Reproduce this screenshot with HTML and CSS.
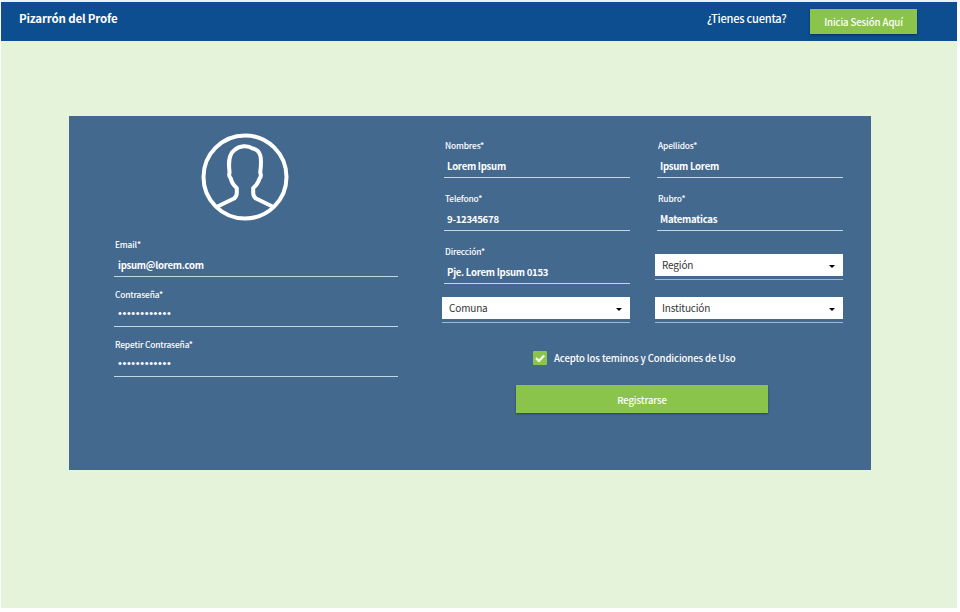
FILE: index.html
```html
<!DOCTYPE html>
<html lang="es">
<head>
<meta charset="utf-8">
<title>Pizarrón del Profe</title>
<link rel="stylesheet" href="styles.css">
</head>
<body>
<div class="page">
  <header class="topbar">
    <span class="brand">Pizarrón del Profe</span>
    <span class="question">¿Tienes cuenta?</span>
    <a class="login">Inicia Sesión Aquí</a>
  </header>
  <main class="card">
    <section class="account">
      <svg class="avatar" viewBox="0 0 88 88" fill="none" stroke="#fff" stroke-width="4" stroke-linejoin="round">
        <circle cx="44" cy="44" r="41.500"/>
        <path d="M16.500 73.500L33 65.500Q35.800 63.500 35.800 60V55Q31 51 29.800 45.500Q27.300 43 28.600 39.500C27.500 31 27 22 33.500 17C38.500 12.500 47 12 51.500 15.500C60.500 17 61 26 59.200 39.500Q60.800 43 58.500 45.500Q57 51 52.200 55V60Q52.200 63.500 55 65.500L71.500 73.500"/>
      </svg>
      <div class="field"><label class="label">Email*</label><div class="value email">ipsum@lorem.com</div></div>
      <div class="field"><label class="label">Contraseña*</label><div class="value dots">••••••••••••</div></div>
      <div class="field"><label class="label">Repetir Contraseña*</label><div class="value dots">••••••••••••</div></div>
    </section>
    <section class="personal">
      <div class="grid">
        <div class="field"><label class="label">Nombres*</label><div class="value">Lorem Ipsum</div></div>
        <div class="field"><label class="label">Apellidos*</label><div class="value">Ipsum Lorem</div></div>
        <div class="field"><label class="label">Telefono*</label><div class="value">9-12345678</div></div>
        <div class="field"><label class="label">Rubro*</label><div class="value">Matematicas</div></div>
        <div class="field"><label class="label">Dirección*</label><div class="value">Pje. Lorem Ipsum 0153</div></div>
        <div class="select region"><div class="box">Región<i class="caret"></i></div></div>
        <div class="select"><div class="box">Comuna<i class="caret"></i></div></div>
        <div class="select"><div class="box">Institución<i class="caret"></i></div></div>
      </div>
      <div class="terms">
        <span class="check"><svg viewBox="0 0 14 14" fill="none" stroke="#fff" stroke-width="2.300"><path d="M3 7.200L6 10L11.200 4.500"/></svg></span>
        <span class="terms-text">Acepto los teminos y Condiciones de Uso</span>
      </div>
      <div class="submit">Registrarse</div>
    </section>
  </main>
</div>
</body>
</html>
```
FILE: styles.css
```css
* { box-sizing: border-box; }
body {
  margin: 0;
  background: #fdfefd;
  font-family: "Noto Sans CJK SC", "Open Sans", sans-serif;
  color: #fff;
}
.page {
  width: 956px;
  height: 608px;
  margin-left: 1px;
  border-top: 2px solid #e6f3f1;
  background: #e6f3db;
}
.topbar {
  display: flex;
  height: 39px;
  background: #0c4e90;
}
.brand {
  width: 688px;
  padding: 7px 0 0 18px;
  font-size: 11.5px;
  letter-spacing: -.17px;
  line-height: 19px;
  font-weight: 700;
}
.question {
  width: 121px;
  padding-left: 18px;
  padding-top: 7px;
  font-size: 11.1px;
  letter-spacing: -.25px;
  line-height: 19px;
  font-weight: 500;
}
.login {
  width: 107px;
  height: 25px;
  margin-top: 7px;
  background: #8bc44a;
  box-shadow: 0 1px 2px rgba(0, 20, 50, .5);
  font-size: 9.6px;
  letter-spacing: -.1px;
  line-height: 27px;
  font-weight: 500;
  text-align: center;
}
.card {
  display: flex;
  width: 802px;
  height: 354px;
  margin: 75px 0 0 68px;
  padding-left: 45px;
  background: #44698f;
}
.account { width: 284px; margin-right: 44px; padding-top: 17px; }
.avatar { display: block; width: 88px; height: 88px; margin: 0 0 6px 86.5px; }
.account .field { height: 50px; }
.field { border-bottom: 1px solid #c4d6e4; }
.label {
  display: block;
  padding-left: 1px;
  font-size: 8.4px;
  letter-spacing: -.15px;
  line-height: 14px;
  font-weight: 500;
}
.value {
  padding-left: 3px;
  font-size: 9.6px;
  letter-spacing: -.27px;
  line-height: 16px;
  font-weight: 700;
}
.account .label { padding-top: 10px; }
.account .value { margin-top: 6px; }
.account .email { padding-left: 4px; }
.account .dots {
  margin-top: 4px;
  padding-left: 4px;
  font-family: "Liberation Sans", sans-serif;
  font-size: 11px;
  letter-spacing: .6px;
  font-weight: 400;
}
.grid {
  display: grid;
  grid-template-columns: 188px 188px;
  grid-template-rows: 53px 53px 53px 40px;
  column-gap: 25px;
  padding-top: 9px;
}
.grid .field { margin-left: 2px; }
.grid .label { padding-top: 13px; }
.grid .value { margin-top: 6px; }
.select { padding-top: 13px; }
.region { padding-top: 23px; }
.select::after {
  content: "";
  display: block;
  margin-top: 3px;
  border-top: 1px solid #a0b9cf;
}
.box {
  display: flex;
  align-items: center;
  justify-content: space-between;
  height: 22px;
  padding: 0 8px 0 7px;
  background: #fff;
  color: #333;
  font-size: 10px;
  letter-spacing: -.15px;
  line-height: 22px;
}
.caret {
  margin-top: 2px;
  border: 3.5px solid transparent;
  border-top-color: #000;
  border-bottom: 0;
}
.terms { display: flex; align-items: center; height: 16px; margin: 26px 0 0 91px; }
.check { width: 14px; height: 14px; background: #8bc44a; border-radius: 1px; }
.check svg { display: block; width: 14px; height: 14px; }
.terms-text { margin-left: 7px; font-size: 9.6px; letter-spacing: -.11px; line-height: 16px; font-weight: 500; }
.submit {
  width: 252px;
  height: 28px;
  margin: 19px 0 0 74px;
  background: #8bc44a;
  box-shadow: 0 1px 2px rgba(0, 30, 50, .5);
  font-size: 9.5px;
  letter-spacing: -.1px;
  line-height: 30px;
  font-weight: 500;
  text-align: center;
}
```
